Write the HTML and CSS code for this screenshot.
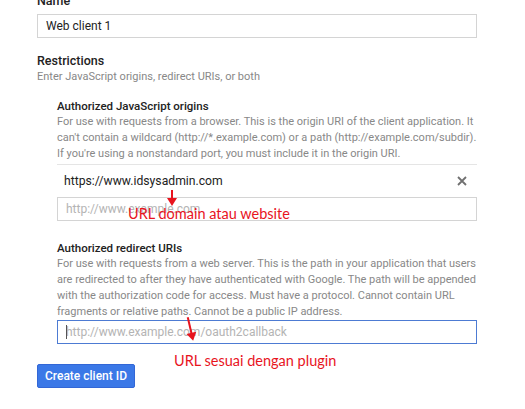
FILE: index.html
```html
<!DOCTYPE html>
<html lang="en">
<head>
    <meta charset="UTF-8">
    <title>Web client</title>
    <link rel="stylesheet" href="styles.css">
</head>
<body>
    <main class="form">
        <label class="field-label" for="name">Name</label>
        <input class="text-input" type="text" id="name" value="Web client 1">

        <h3 class="group-title">Restrictions</h3>
        <p class="group-hint">Enter JavaScript origins, redirect URIs, or both</p>

        <section class="origin-section">
            <h4 class="sub-title">Authorized JavaScript origins</h4>
            <p class="sub-hint">For use with requests from a browser. This is the origin URI of the client application. It can't contain a wildcard (http://*.example.com) or a path (http://example.com/subdir). If you're using a nonstandard port, you must include it in the origin URI.</p>
            <div class="uri-row">
                <span>https://www.idsysadmin.com</span>
                <svg class="remove" width="10" height="10" viewBox="0 0 10 10">
                    <path d="M1 1L9 9M9 1L1 9" stroke="#707070" stroke-width="1.8"/>
                </svg>
            </div>
            <input class="text-input" type="text" placeholder="http://www.example.com">
            <span class="note note-origin">URL domain atau website</span>
            <span class="arrow arrow-origin"></span>
        </section>

        <section class="redirect-section">
            <h4 class="sub-title">Authorized redirect URIs</h4>
            <p class="sub-hint">For use with requests from a web server. This is the path in your application that users are redirected to after they have authenticated with Google. The path will be appended with the authorization code for access. Must have a protocol. Cannot contain URL fragments or relative paths. Cannot be a public IP address.</p>
            <input class="text-input focused" type="text" placeholder="http://www.example.com/oauth2callback">
            <span class="caret"></span>
            <span class="note note-redirect">URL sesuai dengan plugin</span>
            <span class="arrow arrow-redirect"></span>
        </section>

        <button class="primary" type="button">Create client ID</button>
    </main>
</body>
</html>
```

FILE: styles.css
```css
body {
    margin: 0;
    background: #fff;
    font-family: Roboto, Arial, sans-serif;
    color: #222;
}

.form {
    width: 440px;
    padding-left: 37px;
}

.field-label {
    display: block;
    margin-top: -9px;
    font-size: 12.5px;
    line-height: 20px;
    font-weight: 500;
}

.text-input {
    display: block;
    width: 100%;
    height: 24px;
    box-sizing: border-box;
    border: 1px solid #d4d4d4;
    padding: 0 8px;
    font-family: Roboto, Arial, sans-serif;
    font-size: 12px;
    color: #222;
    outline: none;
    margin: 3px 0 0;
}

.text-input::placeholder {
    color: #b4b4b4;
}

.text-input.focused {
    border-color: #4d7bd3;
}

.group-title {
    margin: 15px 0 0;
    font-size: 12.5px;
    line-height: 16px;
    font-weight: 500;
}

.group-hint {
    margin: 0;
    font-size: 11px;
    line-height: 16px;
    color: #888;
}

.origin-section,
.redirect-section {
    position: relative;
    margin-left: 20px;
}

.origin-section {
    margin-top: 13px;
}

.redirect-section {
    margin-top: 19px;
}

.sub-title {
    margin: 0;
    font-size: 11.5px;
    line-height: 16px;
    font-weight: 500;
}

.sub-hint {
    margin: 0;
    font-size: 11px;
    line-height: 16px;
    color: #888;
}

.origin-section .sub-hint {
    padding-bottom: 2px;
    border-bottom: 1px solid #e5e5e5;
}

.uri-row {
    display: flex;
    justify-content: space-between;
    align-items: center;
    height: 32px;
    padding: 0 10px 0 7px;
    font-size: 12.2px;
}

.origin-section .text-input,
.redirect-section .text-input {
    margin-top: 0;
}

.caret {
    position: absolute;
    left: 9px;
    bottom: 5px;
    width: 1px;
    height: 14px;
    background: #555;
}

.note {
    position: absolute;
    font-family: Lato, "DejaVu Sans", sans-serif;
    font-size: 14.5px;
    line-height: 18px;
    color: #e8141e;
    white-space: nowrap;
}

.note-origin {
    left: 71px;
    top: 107px;
}

.note-redirect {
    left: 117px;
    top: 112px;
}

.arrow {
    position: absolute;
    width: 2px;
    background: #e8141e;
}

.arrow::after {
    content: "";
    position: absolute;
    left: -4px;
    bottom: -4px;
    border-left: 5px solid transparent;
    border-right: 5px solid transparent;
    border-top: 8px solid #e8141e;
}

.arrow-origin {
    left: 114px;
    top: 92px;
    height: 12px;
}

.arrow-redirect {
    left: 132px;
    top: 77px;
    height: 20px;
    transform: rotate(-13deg);
}

.primary {
    margin-top: 20px;
    background: #3b78e7;
    color: #fff;
    border: 1px solid #3367d6;
    border-radius: 2px;
    height: 24px;
    padding: 0 7px;
    font-family: Roboto, Arial, sans-serif;
    font-size: 12px;
    font-weight: 500;
}
```
